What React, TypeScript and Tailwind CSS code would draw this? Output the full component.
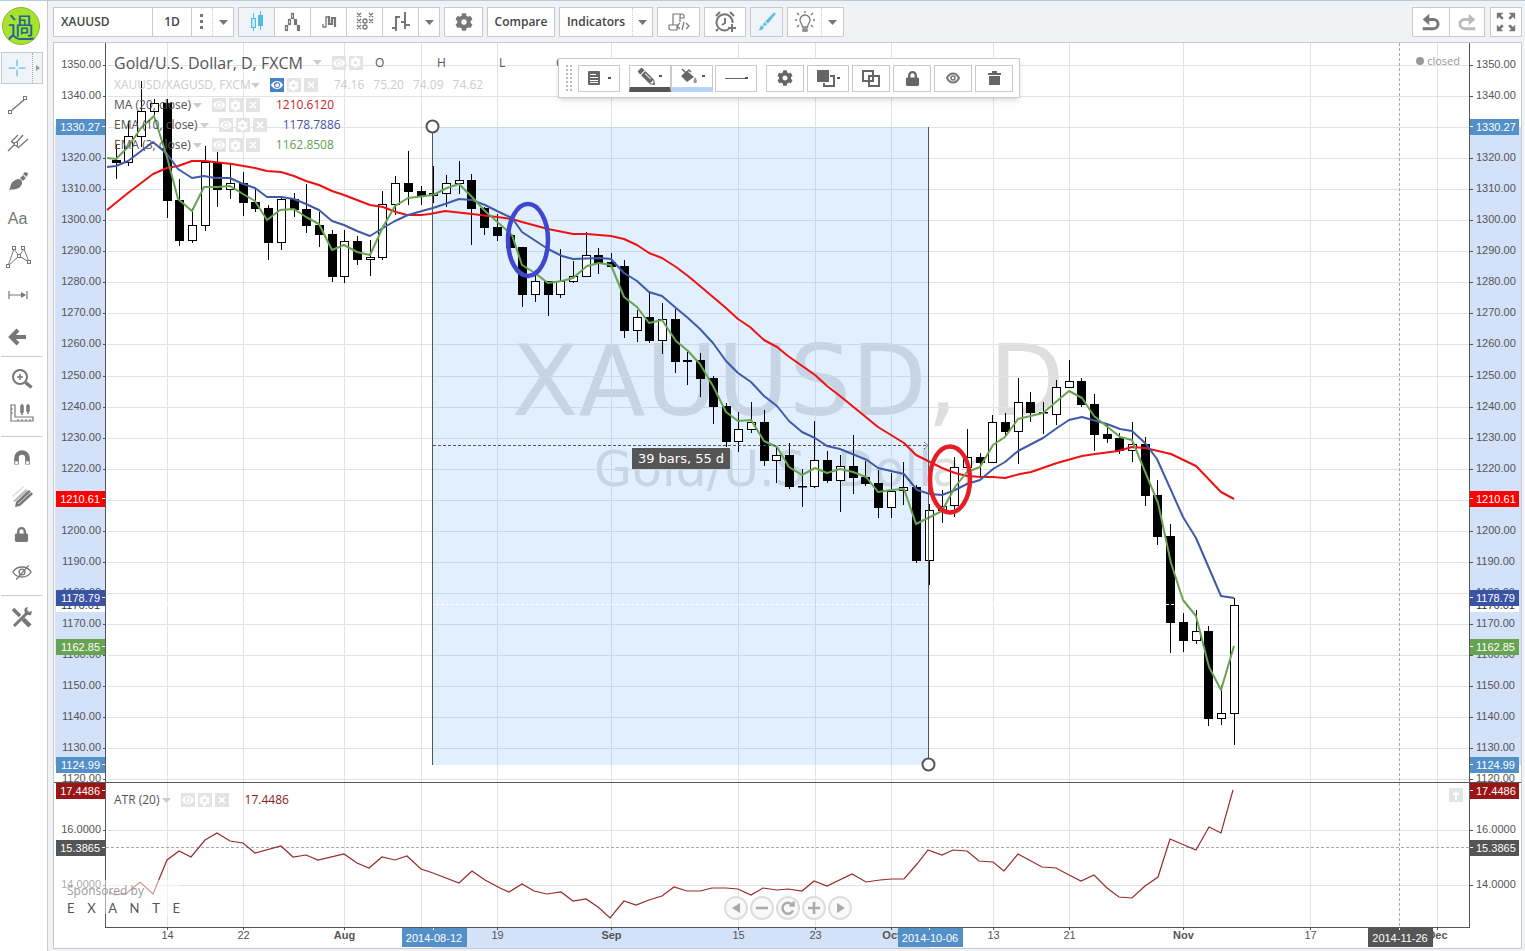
import React from "react";
import { FaCog, FaEye, FaLock, FaPencilAlt, FaTimes } from "react-icons/fa";

// One row per bar: high, body top, body bottom, low, filled
const FIRST_BAR = -4;
const bars = [
  [144, 160, 163, 179, 1], [121, 136, 163, 166, 0], [81, 111, 137, 147, 0], [99, 103, 112, 115, 0],
  [99, 103, 201, 218, 1], [179, 200, 241, 246, 1], [208, 225, 241, 243, 0], [146, 162, 226, 231, 0],
  [145, 162, 190, 207, 1], [163, 183, 190, 199, 0], [172, 183, 203, 216, 1], [188, 202, 209, 212, 1],
  [205, 208, 243, 260, 1], [196, 199, 243, 250, 0], [193, 199, 210, 217, 1], [184, 209, 226, 233, 1],
  [212, 225, 235, 247, 1], [230, 234, 277, 282, 1], [230, 241, 277, 283, 0], [236, 241, 260, 265, 1],
  [240, 257, 260, 276, 0], [191, 204, 258, 260, 0], [176, 183, 205, 215, 0], [151, 183, 192, 205, 1],
  [186, 191, 196, 205, 1], [166, 193, 196, 203, 0], [175, 183, 194, 207, 0], [161, 180, 184, 194, 0],
  [174, 180, 209, 245, 1], [207, 208, 228, 235, 1], [214, 227, 236, 241, 1], [233, 235, 248, 248, 1],
  [247, 247, 295, 307, 1], [270, 281, 295, 302, 0], [281, 281, 295, 316, 1], [249, 281, 295, 298, 0],
  [261, 276, 282, 283, 0], [232, 255, 277, 277, 0], [248, 255, 263, 274, 1], [253, 262, 267, 267, 1],
  [260, 266, 331, 338, 1], [310, 317, 331, 342, 0], [292, 317, 341, 343, 1], [303, 319, 341, 354, 0],
  [309, 319, 362, 373, 1], [352, 360, 362, 385, 1], [353, 360, 379, 397, 1], [376, 378, 407, 424, 1],
  [403, 406, 442, 447, 1], [412, 429, 442, 452, 0], [402, 422, 430, 433, 0], [410, 422, 461, 466, 1],
  [446, 455, 461, 483, 0], [443, 455, 487, 489, 1], [469, 486, 487, 507, 1], [421, 460, 487, 488, 0],
  [451, 460, 481, 483, 1], [455, 466, 481, 512, 0], [435, 466, 478, 494, 1], [461, 477, 484, 486, 1],
  [470, 483, 508, 518, 1], [473, 491, 508, 518, 0], [462, 487, 491, 505, 0], [485, 487, 561, 563, 1],
  [504, 510, 561, 585, 0], [490, 506, 511, 523, 0], [457, 467, 506, 517, 0], [429, 457, 468, 468, 0],
  [453, 457, 463, 477, 1], [415, 422, 463, 463, 0], [413, 422, 432, 437, 1], [378, 402, 432, 464, 0],
  [392, 402, 413, 422, 1], [402, 412, 413, 434, 1], [380, 387, 415, 425, 0], [360, 381, 388, 388, 0],
  [378, 381, 405, 407, 1], [394, 404, 435, 451, 1], [424, 434, 439, 443, 1], [433, 438, 451, 454, 1],
  [422, 444, 451, 462, 0], [437, 444, 496, 506, 1], [480, 495, 537, 545, 1], [524, 536, 623, 653, 1],
  [613, 622, 641, 652, 1], [610, 631, 641, 644, 0], [626, 631, 719, 726, 1], [685, 713, 719, 725, 0],
  [598, 605, 714, 745, 0],
];
const barX = (i: number) => Math.floor(167 + 12.705 * (i + FIRST_BAR)) + 0.5;

const ma20 =
  "107,210 128,193 153,174 167,168 178,166 192,161 205,161 232,164 255,168 267,171 281,172 294,176 306,181 319,185 332,191 344,195 357,200 370,205 383,207 396,212 407,215 421,215 430,214 445,211 472,214 497,217 512,219 522,222 548,229 573,234 587,234 611,236 624,239 637,245 649,253 662,258 676,267 688,276 700,286 713,297 726,308 738,319 750,327 764,340 777,347 788,356 815,375 827,386 840,396 867,418 878,427 904,443 916,455 930,462 942,468 955,473 967,476 982,477 993,477 1005,478 1020,474 1031,472 1057,463 1082,456 1095,454 1118,451 1132,447 1145,448 1158,451 1171,454 1196,466 1221,492 1234,499";
const ema10 =
  "107,167 116,166 128,161 153,142 167,154 178,169 192,178 204,176 215,178 230,178 243,184 255,188 267,197 281,197 294,199 306,204 319,210 332,221 344,225 357,231 370,236 383,228 395,221 408,215 422,211 433,208 445,204 459,199 472,200 485,205 497,211 512,218 522,232 548,249 562,256 573,259 600,258 611,259 624,273 637,281 649,292 662,296 676,308 688,318 700,329 713,343 726,361 738,373 751,382 764,396 777,406 789,421 802,432 815,438 827,446 840,449 867,460 878,468 904,474 917,490 930,494 942,495 955,490 967,484 980,480 993,469 1005,462 1018,451 1043,438 1057,428 1069,420 1082,417 1107,424 1120,429 1132,431 1145,443 1157,459 1183,517 1196,538 1221,596 1234,598";
const ema3 =
  "107,158 116,159 128,147 141,128 154,116 167,157 178,199 192,211 204,187 217,187 230,186 243,194 255,201 267,220 280,210 294,209 306,217 319,224 332,250 344,245 357,252 370,255 383,227 395,206 408,198 433,195 447,188 459,184 472,197 485,211 512,235 522,265 535,273 548,283 562,281 573,278 587,266 599,263 611,265 624,297 637,307 649,323 662,320 676,341 688,351 700,364 713,386 726,412 738,421 751,420 764,441 777,447 789,467 802,475 815,468 827,473 840,469 853,472 866,477 878,492 891,490 904,489 916,524 930,517 942,511 955,487 967,472 980,467 993,445 1005,437 1018,419 1043,413 1057,401 1069,391 1082,398 1094,416 1120,437 1132,440 1158,503 1171,563 1183,600 1196,616 1209,667 1221,690 1234,646";
const atr =
  "109,892 115,895 127,893 140,882 153,894 167,860 179,851 191,857 205,840 217,833 230,841 243,843 255,853 281,846 293,857 306,855 318,860 344,854 357,863 369,868 382,857 395,860 407,856 421,869 433,873 459,883 472,871 485,880 500,888 509,892 522,884 534,891 547,894 561,892 573,901 586,899 598,907 610,918 624,901 636,905 649,900 662,896 674,887 687,891 700,891 712,888 726,888 738,889 751,895 763,888 777,890 788,889 802,891 814,881 827,886 852,874 866,882 880,880 892,879 904,879 917,864 928,850 942,855 953,850 967,851 979,861 993,862 1004,871 1018,854 1042,867 1056,868 1069,875 1081,881 1094,875 1107,888 1119,897 1132,898 1145,886 1158,877 1170,839 1196,850 1209,827 1221,833 1233,790";

const prices = Array.from({ length: 24 }, (_, i) => 1350 - i * 10);
const priceY = (p: number) => Math.floor(65.3 + (1350 - p) * 3.107) + 0.5;

const dates = [
  { x: 167.5, label: "14" },
  { x: 243.5, label: "22" },
  { x: 344.5, label: "Aug", bold: true },
  { x: 421.5, label: "" },
  { x: 497.5, label: "19" },
  { x: 611.5, label: "Sep", bold: true },
  { x: 738.5, label: "15" },
  { x: 815.5, label: "23" },
  { x: 891.5, label: "Oct", bold: true },
  { x: 993.5, label: "13" },
  { x: 1069.5, label: "21" },
  { x: 1183.5, label: "Nov", bold: true },
  { x: 1310.5, label: "17" },
  { x: 1437.5, label: "Dec", bold: true },
];

const priceFlags = [
  { y: 127, text: "1330.27", color: "#5490c8" },
  { y: 499, text: "1210.61", color: "#ff0000" },
  { y: 598, text: "1178.79", color: "#3a53a4" },
  { y: 647, text: "1162.85", color: "#67a350" },
  { y: 765, text: "1124.99", color: "#5490c8" },
];
const atrFlags = [
  { y: 791, text: "17.4486", color: "#981616" },
  { y: 848, text: "15.3865", color: "#555555" },
];
const dateFlags = [
  { x: 434, text: "2014-08-12", color: "#5490c8" },
  { x: 930, text: "2014-10-06", color: "#5490c8" },
  { x: 1400, text: "2014-11-26", color: "#555555" },
];

const uiFont = "font-['Open_Sans','Noto_Sans',sans-serif]";
const axisFont = "font-['Liberation_Sans',Arial,sans-serif] text-[11px]";

type IconProps = { children: React.ReactNode; size?: number; color?: string; fill?: string };

const Icon = ({ children, size = 24, color = "#777", fill = "none" }: IconProps) => (
  <svg width={size} height={size} viewBox="0 0 24 24" fill={fill} stroke={color} strokeWidth="1.5" aria-hidden="true" className="shrink-0">
    {children}
  </svg>
);

const Caret = ({ color = "#777" }: { color?: string }) => (
  <svg width="9" height="5" viewBox="0 0 9 5" aria-hidden="true" className="shrink-0">
    <path d="M0 0h9L4.5 5z" fill={color} />
  </svg>
);

/* ---------- left drawing tools ---------- */

const Tool = ({ label, children }: { label: string; children: React.ReactNode }) => (
  <button aria-label={label} className="flex h-[38px] w-full items-center justify-center text-[#777]">
    {children}
  </button>
);

const Square = ({ x, y }: { x: number; y: number }) => (
  <rect x={x - 1.5} y={y - 1.5} width="3" height="3" fill="#fff" strokeWidth="1" />
);

const Sidebar = () => (
  <aside className="flex w-12 shrink-0 flex-col border-r border-[#c8cacf] bg-white pr-1 pt-[6px]">
    <div className="ml-[2px] flex h-[38px] w-[38px] items-center justify-center rounded-full border border-[#86b92c] bg-[#a8e22d] font-['Noto_Sans_CJK_SC',sans-serif] text-[27px] leading-none text-[#1e6a92]">
      過
    </div>
    <div className="ml-px mt-[7px] flex h-8 border border-[#c8cacf] bg-[#eff4f8]">
      <button aria-label="Crosshair" className="flex flex-1 items-center justify-center">
        <Icon size={20} color="#5cc0de">
          <path d="M12 2v8M12 14v8M2 12h8M14 12h8" />
        </Icon>
      </button>
      <button aria-label="More cursors" className="flex w-[10px] items-center justify-center border-l border-dotted border-[#aaa]">
        <svg width="4" height="6" viewBox="0 0 4 6"><path d="M0 0l4 3-4 3z" fill="#999" /></svg>
      </button>
    </div>
    <div className="flex w-[35px] flex-col pt-[2px]">
      <Tool label="Trend line">
        <Icon><path d="M5 18L19 6" /><Square x={4} y={19} /><Square x={19} y={5} /></Icon>
      </Tool>
      <Tool label="Pitchfork">
        <Icon><path d="M2 20L10 12M5 11L12 4M9 13L17 4M13 16L22 8M5 10l8 7" strokeWidth="1.3" /><Square x={10} y={13} /></Icon>
      </Tool>
      <Tool label="Brush">
        <Icon color="none" fill="#777"><path d="M3 21c2-3 1-7 5-9 2-2 5-3 7-1 2 2 1 5-1 7-3 3-7 2-11 3zM14 9l3-3 3 3-3 3zM17 5l2-2 3 1-1 4z" /></Icon>
      </Tool>
      <Tool label="Text">
        <span className="font-['Liberation_Sans',Arial,sans-serif] text-base">Aa</span>
      </Tool>
      <Tool label="Pattern">
        <svg width="26" height="26" viewBox="0 0 26 26" fill="none" stroke="#777" aria-hidden="true">
          <path d="M3 22L9 5l5 7 5-7 5 13-10-6L3 22" /><Square x={3} y={22} /><Square x={9} y={4} /><Square x={14} y={12} /><Square x={18} y={4} /><Square x={24} y={18} />
        </svg>
      </Tool>
      <Tool label="Measure range">
        <Icon><path d="M3 8v8M21 8v8M3 12h16" strokeWidth="1.2" /><path d="M15 9l5 3-5 3z" fill="#777" stroke="none" /></Icon>
      </Tool>
      <div className="h-1" />
      <Tool label="Icons">
        <Icon><path d="M20 12H6M12 5l-7 7 7 7" strokeWidth="4" /></Icon>
      </Tool>
    </div>
    <hr className="mx-px border-[#c8cacf]" />
    <div className="flex flex-col pt-[3px]">
      <Tool label="Zoom in">
        <Icon><circle cx="10" cy="10" r="7" strokeWidth="2" /><path d="M10 7v6M7 10h6" /><path d="M15.500 15.500l6 5" strokeWidth="3.500" /></Icon>
      </Tool>
      <div className="-mt-1">
        <Tool label="Measure">
          <Icon><path d="M1 4v16h22v-4H5V4zM1 8h2M1 12h2M8 18v2M12 18v2M16 18v2M20 18v2" strokeWidth="1.2" /><path d="M12 3v11M18 3v10" /><path d="M11 5h2v6h-2zM17 5h2v5h-2z" /></Icon>
        </Tool>
      </div>
    </div>
    <hr className="mx-px mt-1 border-[#c8cacf]" />
    <div className="flex flex-col pt-[2px]">
      <Tool label="Magnet">
        <Icon size={22}><path d="M6 19v-7a6 6 0 0 1 12 0v7" strokeWidth="5" /><path d="M4.500 15.500h3v3h-3zM16.500 15.500h3v3h-3z" fill="#fff" stroke="none" /></Icon>
      </Tool>
      <Tool label="Keep drawing">
        <Icon color="none" fill="#777"><path d="M2 12L13 2l1 1L3 13z" fill="#ddd" /><path d="M3 17L16 5l2 2L5 18z" fill="#bbb" /><path d="M6 18L19 6l4 4-13 12-5 1z" /><path d="M8 20L21 8" stroke="#fff" strokeWidth=".8" /></Icon>
      </Tool>
      <Tool label="Lock drawings"><FaLock size={15} /></Tool>
      <Tool label="Hide drawings">
        <Icon size={20}><path d="M1 12c5-8 17-8 22 0-5 8-17 8-22 0zM5 21L20 4" strokeWidth="1.6" /><circle cx="12" cy="12" r="3.500" /></Icon>
      </Tool>
    </div>
    <hr className="mx-px mt-1 border-[#c8cacf]" />
    <div className="pt-[2px]">
      <Tool label="Tools">
        <Icon><path d="M4 21L17 8" strokeWidth="3" /><path d="M15 3a5 5 0 0 0 6 7l1-4-3 1-2-2 1-3z" fill="#777" stroke="none" /><path d="M3 4l7 7" strokeWidth="3.500" /><path d="M13 14l7 7" strokeWidth="4.500" /></Icon>
      </Tool>
    </div>
  </aside>
);

/* ---------- top toolbar ---------- */

const box = "flex h-[30px] shrink-0 items-stretch border border-[#c8cacf] bg-white";
const cell = "flex items-center justify-center border-[#c8cacf]";

const Toolbar = () => (
  <header className={`flex h-9 items-end gap-1 pl-[5px] pr-[3px] text-xs font-semibold text-[#444] ${uiFont}`}>
    <div className={`${box} w-[181px]`}>
      <input aria-label="Symbol" defaultValue="XAUUSD" className="w-[98px] px-[7px] outline-none" />
      <button className={`${cell} w-[39px] border-l`}>1D</button>
      <button aria-label="Intervals" className={`${cell} w-[21px] border-l`}>
        <svg width="4" height="16" viewBox="0 0 4 16"><path d="M0 0h3v3H0zM0 6h3v3H0zM0 12h3v3H0z" fill="#777" /></svg>
      </button>
      <button aria-label="Interval list" className={`${cell} flex-1 border-l border-dotted`}><Caret /></button>
    </div>
    <div className={box}>
      <button aria-label="Candles" className={`${cell} w-[35px] bg-[#eff4f8]`}>
        <Icon color="#4fbcdf"><path d="M8.500 3v18M15.500 1v19" strokeWidth="1" /><rect x="6.500" y="8.500" width="4" height="9" fill="#c3e8f5" strokeWidth="1" /><rect x="13.500" y="5.500" width="4" height="10" fill="#4fbcdf" strokeWidth="1" /></Icon>
      </button>
      <button aria-label="Renko" className={`${cell} w-9 border-l`}>
        <Icon><g strokeWidth="1.200"><rect x="4.500" y="15.500" width="2" height="5" /><rect x="7.500" y="9.500" width="2" height="5" /><rect x="10.500" y="3.500" width="2" height="5" /><rect x="13.500" y="9.500" width="2" height="5" fill="#777" /><rect x="16.500" y="15.500" width="2" height="5" fill="#777" /></g></Icon>
      </button>
      <button aria-label="Kagi" className={`${cell} w-9 border-l`}>
        <Icon><path d="M6 14v3h3V7h3" strokeWidth="1.300" /><path d="M12 6v8h3V8h3v9" strokeWidth="2.200" /></Icon>
      </button>
      <button aria-label="Point and figure" className={`${cell} w-9 border-l`}>
        <Icon>
          <g strokeWidth="1.300">
            <path d="M4 3l4 4M8 3l-4 4M16 3l4 4M20 3l-4 4M4 9l4 4M8 9l-4 4M16 9l4 4M20 9l-4 4M4 15l4 4M8 15l-4 4" />
            <circle cx="12" cy="11" r="2" /><circle cx="12" cy="17" r="2" />
          </g>
        </Icon>
      </button>
      <button aria-label="Bars" className={`${cell} w-9 border-l`}>
        <Icon><path d="M7 6v15M3 18h4M7 7h4M16 2v17M12 12h4M16 15h5" strokeWidth="2" /></Icon>
      </button>
      <button aria-label="Chart types" className={`${cell} w-[21px] border-l`}><Caret /></button>
    </div>
    <button aria-label="Settings" className={`${box} w-[39px] !items-center justify-center text-[#777]`}><FaCog size={18} /></button>
    <button className={`${box} w-[68px] !items-center justify-center`}>Compare</button>
    <div className={`${box} w-[94px]`}>
      <button className={`${cell} w-[72px]`}>Indicators</button>
      <button aria-label="Indicator list" className={`${cell} flex-1 border-l border-dotted`}><Caret /></button>
    </div>
    <button aria-label="Script" className={`${box} w-[43px] !items-center justify-center`}>
      <Icon><path d="M6 15V4h9a2 2 0 0 1 2 2v2h-4v4M15 4a2 2 0 0 0-2 2v3M2 15h8v5H4a2 2 0 0 1-2-2zM13 13l-3 3 3 3M19 13l3 3-3 3M17 12l-2 8" strokeWidth="1.200" /></Icon>
    </button>
    <button aria-label="Alert" className={`${box} w-[42px] !items-center justify-center`}>
      <Icon><path d="M16 19a8 8 0 1 1 3.500-6M12 8v5l-3 2M5 19l-2 2M3 6l4-4M21 6l-4-4" strokeWidth="2" /><path d="M19 14v8M15 18h8" strokeWidth="2" /></Icon>
    </button>
    <button aria-label="Drawings" className={`${box} w-[33px] !items-center justify-center !bg-[#eff4f8]`}>
      <Icon color="none" fill="#5cc0e3" size={20}><path d="M21 1c1 0 2 1 1 2L13 14l-3-3L20 1zM9 12l3 3-3 2-2-2zM6 16l2 2c0 3-3 4-6 4 2-2 1-5 4-6z" /></Icon>
    </button>
    <div className={`${box} w-[57px]`}>
      <button aria-label="Ideas" className={`${cell} w-[33px]`}>
        <Icon><path d="M9.500 17c0-3-2.500-4-2.500-7a5 5 0 0 1 10 0c0 3-2.500 4-2.500 7zM10 19h4v2h-4zM12 1v2M4 3l2 2M20 3l-2 2M2 10h2M20 10h2M4 17l2-2M20 17l-2-2" strokeWidth="1.300" /></Icon>
      </button>
      <button aria-label="Idea list" className={`${cell} flex-1 border-l border-dotted`}><Caret /></button>
    </div>
    <div className={`${box} ml-auto mr-px w-[73px]`}>
      <button aria-label="Undo" className={`${cell} w-9`}>
        <Icon size={20}><path d="M2 20h13a5 5 0 0 0 0-11H8" strokeWidth="3.500" /><path d="M10 2v14L2 9z" fill="#777" stroke="none" /></Icon>
      </button>
      <button aria-label="Redo" className={`${cell} flex-1 border-l`}>
        <Icon size={20} color="#bbb"><path d="M22 20H9A5 5 0 0 1 9 9h7" strokeWidth="3.500" /><path d="M14 2v14l8-7z" fill="#bbb" stroke="none" /></Icon>
      </button>
    </div>
    <button aria-label="Fullscreen" className={`${box} w-8 !items-center justify-center`}>
      <Icon size={22} color="none" fill="#777"><path d="M2 2h7L6.500 4.500l3 3-2 2-3-3L2 9zM22 2h-7l2.500 2.500-3 3 2 2 3-3L22 9zM2 22h7l-2.500-2.500 3-3-2-2-3 3L2 15zM22 22h-7l2.500-2.500-3-3 2-2 3 3L22 15z" /></Icon>
    </button>
  </header>
);

/* ---------- floating drawing toolbar ---------- */

const fbox = "flex h-[27px] items-center justify-center gap-1 border border-[#c8cacf] bg-white text-[#666]";
const Dot = () => <span className="h-[2px] w-[3px] bg-[#555]" />;

const FloatingBar = () => (
  <div className="absolute left-[452px] top-[15px] flex h-10 w-[462px] items-center border border-[#c8cacf] bg-white pl-[7px] shadow-md">
    <div className="grid grid-cols-2 gap-x-[2px] gap-y-[2px]">
      {Array.from({ length: 14 }, (_, i) => <span key={i} className="h-[2px] w-[2px] bg-[#bbb]" />)}
    </div>
    <button aria-label="Template" className={`${fbox} ml-[6px] w-[42px] !gap-2`}>
      <svg width="12" height="14" viewBox="0 0 12 14"><rect width="12" height="14" rx="1" fill="#666" /><path d="M2 3.500h6M2 6.500h8M2 9.500h8M2 11.500h8" stroke="#fff" /></svg>
      <Dot />
    </button>
    <button aria-label="Line colour" className={`${fbox} ml-[9px] w-[42px] border-b-[5px] !border-b-[#555]`}>
      <FaPencilAlt size={17} className="-scale-x-100" /><Dot />
    </button>
    <button aria-label="Fill colour" className={`${fbox} w-[42px] border-b-[5px] !border-b-[#b9d5fa]`}>
      <svg width="18" height="16" viewBox="0 0 18 16"><path d="M7 3l7 6-7 5-6-6z" fill="#666" /><path d="M2 1l7 7M3 8l6-6 2 2" stroke="#666" strokeWidth="1.500" fill="none" /><path d="M15 9c3 4 2 6 0 6s-2-2 0-6z" fill="#999" /></svg>
      <Dot />
    </button>
    <button aria-label="Line width" className={`${fbox} ml-[2px] w-[42px] !gap-0`}>
      <span className="h-px w-5 bg-[#666]" /><Dot />
    </button>
    <button aria-label="Format" className={`${fbox} ml-[9px] w-[38px]`}><FaCog size={16} /></button>
    <button aria-label="Order" className={`${fbox} ml-[3px] w-[42px] !gap-[2px]`}>
      <svg width="18" height="17" viewBox="0 0 18 17"><path d="M0 0h12v12H0z" fill="#666" /><path d="M13 6h4v10H7v-3" fill="none" stroke="#666" strokeWidth="2" /></svg>
      <Dot />
    </button>
    <button aria-label="Clone" className={`${fbox} ml-[3px] w-[38px]`}>
      <svg width="18" height="17" viewBox="0 0 18 17" fill="none" stroke="#666" strokeWidth="2"><path d="M1 1h10v10H1zM7 6h10v10H7z" /></svg>
    </button>
    <button aria-label="Lock" className={`${fbox} ml-[3px] w-[38px]`}><FaLock size={15} /></button>
    <button aria-label="Hide" className={`${fbox} ml-[3px] w-[38px]`}>
      <svg width="14" height="12" viewBox="0 0 14 12" fill="none" stroke="#777"><path d="M1 6c3-6 9-6 12 0-3 6-9 6-12 0z" strokeWidth="2" /><circle cx="7" cy="6" r="2" strokeWidth="1.500" /></svg>
    </button>
    <button aria-label="Remove" className={`${fbox} ml-[3px] w-[38px]`}>
      <svg width="13" height="14" viewBox="0 0 13 14" fill="#666"><path d="M0 2h4V0h5v2h4v2H0zM1 5h11v9H1z" /></svg>
    </button>
  </div>
);

/* ---------- chart legend ---------- */

const mini = "flex h-[14px] w-[14px] items-center justify-center bg-[#e3e4e6] text-white";

const LegendButtons = ({ close = true, active = false }: { close?: boolean; active?: boolean }) => (
  <div className="ml-[10px] flex gap-[3px]">
    <button aria-label="Toggle visibility" className={active ? `${mini} !bg-[#4a7fd0]` : mini}><FaEye size={12} /></button>
    <button aria-label="Format study" className={mini}><FaCog size={11} /></button>
    {close && <button aria-label="Remove study" className={mini}><FaTimes size={10} /></button>}
  </div>
);

const studies = [
  { name: "MA (20, close)", value: "1210.6120", tone: "text-[#d01c28]" },
  { name: "EMA (10, close)", value: "1178.7886", tone: "text-[#3f55a5]" },
  { name: "EMA (3, close)", value: "1162.8508", tone: "text-[#64a04e]" },
];

const Legend = () => (
  <div className={`absolute left-2 top-[7px] text-xs text-[#555] ${uiFont}`}>
    <div className="flex h-[25px] items-center">
      <h1 className="mr-[10px] text-base">Gold/U.S. Dollar, D, FXCM</h1>
      <Caret color="#ccc" />
      <LegendButtons close={false} />
      <div className="ml-3 flex">
        <span className="w-[62px]">O</span><span className="w-[62px]">H</span><span className="w-[57px]">L</span><span>C</span>
      </div>
    </div>
    <div className="flex h-5 items-center text-[#ccc]">
      <span>XAUUSD/XAGUSD, FXCM</span>
      <Caret color="#ccc" />
      <LegendButtons active />
      <div className="ml-4 flex gap-[9px]">
        <span>74.16</span><span>75.20</span><span>74.09</span><span>74.62</span>
      </div>
    </div>
    {studies.map((s) => (
      <div key={s.name} className="flex h-5 items-center">
        <span className="mr-[2px]">{s.name}</span>
        <Caret color="#ccc" />
        <LegendButtons />
        <span className={`ml-4 ${s.tone}`}>{s.value}</span>
      </div>
    ))}
  </div>
);

/* ---------- axes and panes ---------- */

type Flag = { y: number; text: string; color: string };

const AxisLabel = ({ y, text, right }: { y: number; text: string; right?: boolean }) => (
  <g>
    <path d={right ? `M0 ${y}h3` : `M49 ${y}h3`} stroke="#555" />
    <text x={right ? 6 : 47} y={y + 2} textAnchor={right ? "start" : "end"} fill="#555">{text}</text>
  </g>
);

const AxisFlag = ({ flag, right }: { flag: Flag; right?: boolean }) => (
  <g>
    <rect x={right ? 0 : 2} y={flag.y - 8} width="49" height="16" fill={flag.color} />
    <path d={right ? `M0 ${flag.y - 0.5}h3` : `M48 ${flag.y - 0.5}h3`} stroke="#fff" />
    <text x={right ? 6 : 46} y={flag.y + 4} textAnchor={right ? "start" : "end"} fill="#fff">{flag.text}</text>
  </g>
);

const PriceAxis = ({ right }: { right?: boolean }) => (
  <svg className={`h-full w-full border-b border-[#555] ${axisFont} ${right ? "border-l" : "border-r"}`}>
    <g transform="translate(0 -43)">
      <rect x={right ? 0 : 1} y="127" width="51" height="638" fill="#d3e1f9" />
      {prices.filter((p) => p !== 1330 && p !== 1210).map((p) => (
        <AxisLabel key={p} y={priceY(p)} text={p.toFixed(2)} right={right} />
      ))}
      <rect x={right ? 0 : 2} y="598" width="49" height="14" fill="#fff" />
      <text x={right ? 6 : 46} y="609" textAnchor={right ? "start" : "end"} fill="#333">1176.01</text>
      {priceFlags.map((f) => <AxisFlag key={f.text} flag={f} right={right} />)}
    </g>
  </svg>
);

const AtrAxis = ({ right }: { right?: boolean }) => (
  <svg className={`h-full w-full ${axisFont} ${right ? "border-l border-[#555]" : "border-r border-[#555]"}`}>
    <g transform="translate(0 -783)">
      <AxisLabel y={830.5} text="16.0000" right={right} />
      <AxisLabel y={885.5} text="14.0000" right={right} />
      {atrFlags.map((f) => <AxisFlag key={f.text} flag={f} right={right} />)}
    </g>
  </svg>
);

const VerticalGrid = () => (
  <g>
    {dates.map((d) => <path key={d.x} d={`M${d.x} 43V927`} stroke="#e3e3e3" />)}
    <path d="M1399.500 43V927" stroke="#aaa" strokeDasharray="3 2" />
  </g>
);

const PricePane = () => (
  <svg className="block h-full w-full" role="img" aria-label="Gold price, daily candles">
    <g transform="translate(-106 -43)">
      <g className="font-['DejaVu_Sans',Verdana,sans-serif]" fill="#dedede" textAnchor="middle">
        <text x="788" y="415" fontSize="98">XAUUSD, D</text>
        <text x="788" y="486" fontSize="49">Gold/U.S. Dollar</text>
      </g>
      {prices.map((p) => <line key={p} x1="108" x2="110%" y1={priceY(p)} y2={priceY(p)} stroke="#e3e3e3" />)}
      <VerticalGrid />
      <rect x="432" y="127" width="497" height="638" fill="#69afff" fillOpacity=".2" />
      <g stroke="#000">
        {bars.map(([high, top, bottom, low, filled], i) => (
          <g key={i}>
            <path d={`M${barX(i)} ${high}V${low}`} />
            <rect x={barX(i) - 4} y={top + 0.5} width="8" height={Math.max(bottom - top - 1, 0.5)} fill={filled ? "#000" : "#fff"} />
          </g>
        ))}
      </g>
      <line x1="106" x2="110%" y1="604.500" y2="604.500" stroke="#fff" strokeDasharray="3 2" />
      <g fill="none" strokeWidth="2" strokeLinejoin="round">
        <polyline points={ma20} stroke="#ee1111" />
        <polyline points={ema10} stroke="#3f5aa8" />
        <polyline points={ema3} stroke="#67a350" />
      </g>
      <g fill="none" stroke="#555">
        <path d="M432.500 127V765M928.500 127V765" />
        <path d="M433 445.500H928" strokeDasharray="3 2" />
        <path d="M924 442l4 3.500-4 3.500" strokeDasharray="2 1" />
        <circle cx="432.500" cy="126.500" r="6" fill="#fff" strokeWidth="2" />
        <circle cx="928.500" cy="764.500" r="6" fill="#fff" strokeWidth="2" />
      </g>
      <rect x="632" y="448" width="98" height="21" fill="#555" />
      <text x="681" y="463" textAnchor="middle" fill="#fff" className="font-['DejaVu_Sans',sans-serif] text-[13px]">39 bars, 55 d</text>
      <ellipse cx="528" cy="240" rx="20" ry="36" fill="none" stroke="#3f48cc" strokeWidth="4.500" />
      <ellipse cx="950" cy="479.500" rx="20" ry="33" fill="none" stroke="#e81c24" strokeWidth="4.500" />
    </g>
  </svg>
);

const AtrPane = () => (
  <svg className="block h-full w-full" role="img" aria-label="Average true range">
    <g transform="translate(-106 -783)">
      <line x1="108" x2="110%" y1="830.500" y2="830.500" stroke="#e3e3e3" />
      <line x1="108" x2="110%" y1="885.500" y2="885.500" stroke="#e3e3e3" />
      <VerticalGrid />
      <line x1="106" x2="110%" y1="847.500" y2="847.500" stroke="#aaa" strokeDasharray="3 2" />
      <polyline points={atr} fill="none" stroke="#9a2a2a" strokeWidth="1.200" />
    </g>
  </svg>
);

const TimeAxis = () => (
  <svg className={`block h-full w-full ${axisFont}`}>
    <g transform="translate(-54 -928)" textAnchor="middle">
      <rect x="432" y="928" width="497" height="20" fill="#d3e1f9" />
      {dates.map((d) => (
        <g key={d.x}>
          <path d={`M${d.x} 927v3`} stroke="#555" />
          <text x={d.x} y="939" fill="#555" className={d.bold ? "font-bold" : ""}>{d.label}</text>
        </g>
      ))}
      {dateFlags.map((f) => (
        <g key={f.text}>
          <rect x={f.x - 32} y="928" width="65" height="19" fill={f.color} />
          <path d={`M${f.x - 0.5} 928v2`} stroke="#fff" />
          <text x={f.x} y="942" fill="#fff">{f.text}</text>
        </g>
      ))}
    </g>
  </svg>
);

const navButtons = [
  { label: "Scroll left", d: "M16 7v10l-8-5z", filled: true },
  { label: "Zoom out", d: "M6 12h12", filled: false },
  { label: "Reset", d: "M17 14.500A5.500 5.500 0 1 1 15.500 8M17.500 5.500v4h-4", filled: false },
  { label: "Zoom in", d: "M6 12h12M12 6v12", filled: false },
  { label: "Scroll right", d: "M9 7v10l8-5z", filled: true },
];

export default function App() {
  return (
    <div className="flex h-screen min-h-[951px] overflow-hidden border-t border-[#b0cde4] bg-[#f1f2f6]">
      <Sidebar />
      <main className="flex min-w-0 flex-1 flex-col pb-[2px]">
        <Toolbar />
        <section className="ml-[5px] mr-[3px] mt-[5px] grid min-h-0 flex-1 grid-cols-[52px_minmax(0,1fr)_52px] grid-rows-[740px_minmax(0,1fr)_20px] border border-[#c8cacf] bg-white">
          <PriceAxis />
          <div className="relative min-h-0 border-b border-[#555]">
            <PricePane />
            <Legend />
            <FloatingBar />
            <div className={`absolute right-[9px] top-[10px] flex items-center gap-[3px] text-[11px] text-[#999] ${uiFont}`}>
              <span className="h-2 w-2 rounded-full bg-[#999]" />
              closed
            </div>
          </div>
          <PriceAxis right />

          <AtrAxis />
          <div className="relative min-h-0 border-b border-[#555]">
            <AtrPane />
            <div className={`absolute left-2 top-[7px] flex h-5 items-center text-xs text-[#555] ${uiFont}`}>
              <span className="mr-[2px]">ATR (20)</span>
              <Caret color="#ccc" />
              <LegendButtons />
              <span className="ml-4 text-[#8b1a1a]">17.4486</span>
            </div>
            <button aria-label="Move pane up" className={`${mini} absolute right-[6px] top-[5px]`}>
              <svg width="8" height="9" viewBox="0 0 8 9" fill="#fff"><path d="M4 0l4 4H5v5H3V4H0z" /></svg>
            </button>
            <div className={`absolute -left-[44px] top-[97px] w-[118px] bg-white/50 pl-[5px] text-[#999] ${uiFont}`}>
              <p className="text-xs leading-[22px]">Sponsored by</p>
              <p className="flex justify-between font-['Lato',sans-serif] text-[13px] leading-3 text-[#555]">
                {"EXANTE".split("").map((c, i) => <span key={i}>{c}</span>)}
              </p>
            </div>
            <div className="absolute inset-x-0 bottom-[7px] flex justify-center gap-[2px]">
              {navButtons.map((b) => (
                <button key={b.label} aria-label={b.label} className="flex h-6 w-6 items-center justify-center rounded-full border-2 border-[#ddd] bg-[#f7f7f7]/80">
                  <svg width="24" height="24" viewBox="0 0 24 24" className="shrink-0">
                    <path d={b.d} fill={b.filled ? "#aaa" : "none"} stroke={b.filled ? "none" : "#aaa"} strokeWidth="2.500" />
                  </svg>
                </button>
              ))}
            </div>
          </div>
          <AtrAxis right />

          <div className="col-span-3">
            <TimeAxis />
          </div>
        </section>
      </main>
    </div>
  );
}
